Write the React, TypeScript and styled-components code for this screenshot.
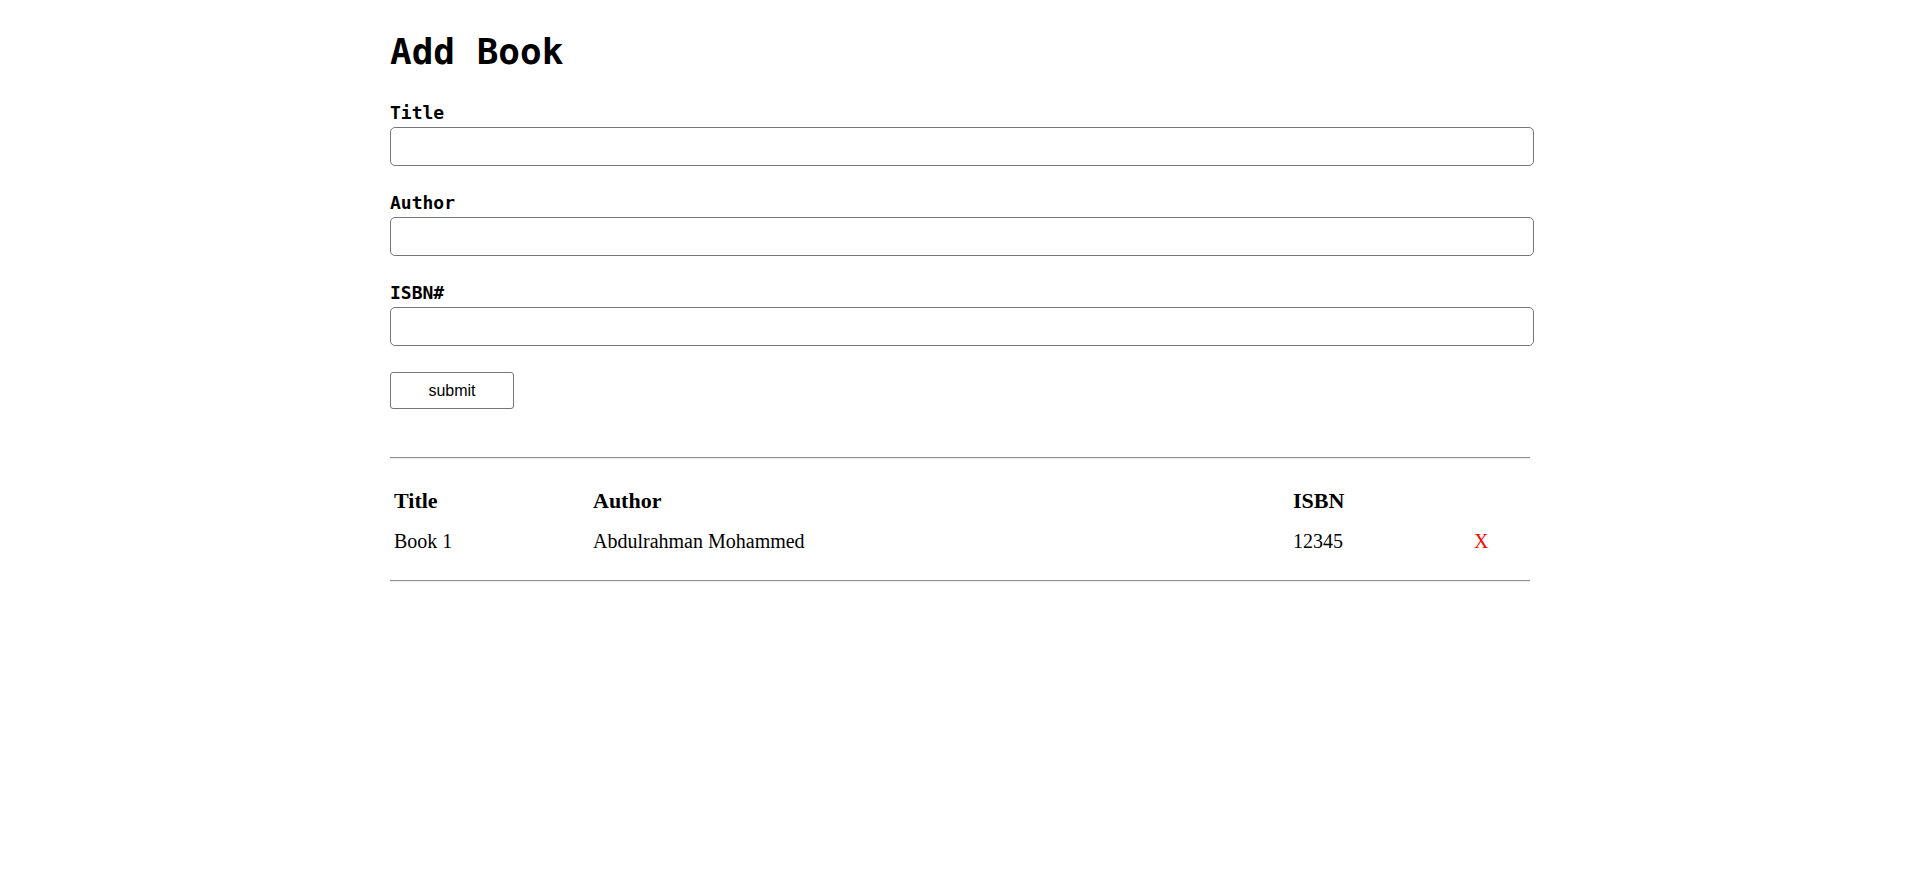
import styled, { createGlobalStyle } from 'styled-components';

const GlobalStyle = createGlobalStyle`
  body {
    margin: 0;
    background: #fff;
    color: #000;
    font-family: "Liberation Serif", "Times New Roman", serif;
  }
`;

const Page = styled.div`
  width: 1140px;
  margin: 0 auto;
`;

const Heading = styled.h1`
  font-family: "DejaVu Sans Mono", Consolas, monospace;
  font-size: 36px;
  font-weight: bold;
  line-height: 44px;
  margin: 30px 0 27px;
`;

const Form = styled.form`
  display: flex;
  flex-direction: column;
  gap: 25px;
`;

const Field = styled.div`
  display: flex;
  flex-direction: column;
`;

const Label = styled.label`
  font-family: "DejaVu Sans Mono", Consolas, monospace;
  font-size: 18px;
  font-weight: bold;
  line-height: 21px;
  margin: 1px 0 4px;
`;

const Input = styled.input`
  box-sizing: content-box;
  width: 100%;
  height: 37px;
  padding: 0 1px;
  border: 1px solid #767676;
  border-radius: 5px;
  background: #fff;
  font-size: 16px;
`;

const SubmitButton = styled.button`
  align-self: flex-start;
  width: 124px;
  height: 37px;
  margin-top: 1px;
  border: 1px solid #767676;
  border-radius: 3px;
  background: #fff;
  font-family: "Liberation Sans", Arial, sans-serif;
  font-size: 16px;
  color: #000;
`;

const Divider = styled.hr<{ gapTop: number; gapBottom: number }>`
  margin: ${p => p.gapTop}px 0 ${p => p.gapBottom}px;
  border: 0;
  border-top: 1px solid #8f8f8f;
  border-bottom: 1px solid #ececec;
  height: 0;
`;

const BookTable = styled.table`
  width: 100%;
  border-collapse: collapse;
  table-layout: fixed;
`;

const HeadCell = styled.th<{ w?: number }>`
  width: ${p => (p.w ? `${p.w}px` : 'auto')};
  padding: 0 4px;
  height: 40px;
  text-align: left;
  font-size: 22px;
  font-weight: bold;
`;

const Cell = styled.td<{ danger?: boolean }>`
  padding: 0 4px;
  height: 40px;
  font-size: 20px;
  color: ${p => (p.danger ? '#ff0000' : '#000')};
  cursor: ${p => (p.danger ? 'pointer' : 'default')};
`;

const books = [{ id: 1, title: 'Book 1', author: 'Abdulrahman Mohammed', isbn: '12345' }];

export default function App() {
  return (
    <>
      <GlobalStyle />
      <Page>
        <Heading>Add Book</Heading>
        <Form onSubmit={e => e.preventDefault()}>
          <Field>
            <Label htmlFor="title">Title</Label>
            <Input id="title" type="text" />
          </Field>
          <Field>
            <Label htmlFor="author">Author</Label>
            <Input id="author" type="text" />
          </Field>
          <Field>
            <Label htmlFor="isbn">ISBN#</Label>
            <Input id="isbn" type="text" />
          </Field>
          <SubmitButton type="submit">submit</SubmitButton>
        </Form>
        <Divider gapTop={48} gapBottom={22} />
        <BookTable>
          <thead>
            <tr>
              <HeadCell w={191}>Title</HeadCell>
              <HeadCell w={692}>Author</HeadCell>
              <HeadCell w={173}>ISBN</HeadCell>
              <HeadCell />
            </tr>
          </thead>
          <tbody>
            {books.map(book => (
              <tr key={book.id}>
                <Cell>{book.title}</Cell>
                <Cell>{book.author}</Cell>
                <Cell>{book.isbn}</Cell>
                <Cell danger>X</Cell>
              </tr>
            ))}
          </tbody>
        </BookTable>
        <Divider gapTop={19} gapBottom={0} />
      </Page>
    </>
  );
}
